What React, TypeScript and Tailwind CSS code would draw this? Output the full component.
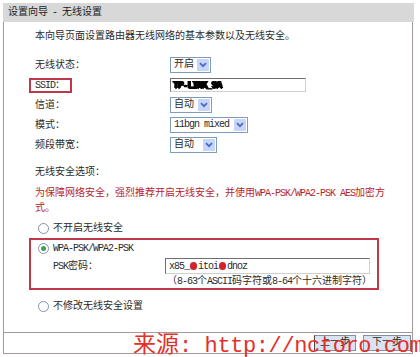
import React from 'react';

const cjk = 'font-["Liberation_Mono","Noto_Sans_CJK_SC",monospace]';

function En({ children }: { children: React.ReactNode }) {
  return <span className="tracking-[-1px]">{children}</span>;
}

function Select({ value, width, mono }: { value: string; width: string; mono?: boolean }) {
  return (
    <div className={`flex h-[16px] items-center border border-[#7f9db9] bg-white ${width}`}>
      <span className={`flex-1 pl-[3px] leading-none ${mono ? 'tracking-[-1px]' : ''}`}>{value}</span>
      <span className="mr-[1px] flex h-[12px] w-[12px] items-center justify-center rounded-[1px] bg-[#c6d5f8]">
        <svg width="8" height="6" viewBox="0 0 8 6">
          <path d="M1 1.2 L4 4.2 L7 1.2" fill="none" stroke="#4d6ac4" strokeWidth="1.8" />
        </svg>
      </span>
    </div>
  );
}

function Radio({ checked }: { checked?: boolean }) {
  return (
    <span className="flex h-[11px] w-[11px] items-center justify-center rounded-full border border-[#8593a8] bg-white">
      {checked && <span className="h-[5px] w-[5px] rounded-full bg-[#3aa64a]" />}
    </span>
  );
}

export default function App() {
  return (
    <div className={`relative h-[357px] w-[420px] overflow-hidden bg-white text-[10px] text-[#2b2b2b] ${cjk}`}>
      {/* title bar */}
      <div className="ml-[3px] mt-[3px] flex h-[19px] w-[411px] items-center bg-[#d8d8d8] pl-[5px] text-[#222]">
        设置向导 <span className="px-[4px]">-</span> 无线设置
      </div>

      <div className="ml-[3px] w-[410px] border-x border-b border-[#a89796]">
        <div className="h-[310px] pl-[31px] pt-[8px]">
          <div className="h-[14px] leading-[14px]">本向导页面设置路由器无线网络的基本参数以及无线安全。</div>

          <div className="mt-[11px]">
            <div className="flex h-[20px] items-center">
              <span className="w-[135px]">无线状态：</span>
              <Select value="开启" width="w-[41px]" />
            </div>
            <div className="flex h-[20px] items-center">
              <span className="w-[135px]">
                <span className="-ml-[6px] inline-block w-[43px] border-2 border-[#c0394a] pl-[4px] leading-[11px]">
                  <En>SSID</En>：
                </span>
              </span>
              <div className="flex h-[14px] w-[136px] items-center overflow-hidden border border-[#6f6f6f] border-b-[#cfcfcf] border-r-[#cfcfcf] bg-white pl-[2px]">
                <span className="text-[10px] font-black text-black blur-[0.4px] tracking-[-1.2px] [text-shadow:1px_0_0_#000,0_1px_0_#000,-1px_0_0_#000]">
                  TP-LINK_9A
                </span>
              </div>
            </div>
            <div className="flex h-[20px] items-center">
              <span className="w-[135px]">信道：</span>
              <Select value="自动" width="w-[42px]" />
            </div>
            <div className="flex h-[20px] items-center">
              <span className="w-[135px]">模式：</span>
              <Select value="11bgn mixed" width="w-[78px]" mono />
            </div>
            <div className="flex h-[20px] items-center">
              <span className="w-[135px]">频段带宽：</span>
              <Select value="自动" width="w-[47px]" />
            </div>
          </div>

          <div className="mt-[11px] h-[14px] leading-[14px]">无线安全选项：</div>
          <div className="mt-[6px] leading-[15px] text-[#b8242c]">
            为保障网络安全，强烈推荐开启无线安全，并使用<En>WPA-PSK/WPA2-PSK AES</En>加密方
            <br />
            式。
          </div>

          <div className="ml-[3px] mt-[4px] flex h-[16px] items-center gap-[4px]">
            <Radio />
            <span>不开启无线安全</span>
          </div>

          <div className="-ml-[6px] mt-[2px] h-[52px] w-[350px] border-2 border-[#c0394a] pl-[7px]">
            <div className="flex h-[16px] items-center gap-[4px]">
              <Radio checked />
              <En>WPA-PSK/WPA2-PSK</En>
            </div>
            <div className="ml-[15px] mt-[2px] flex h-[16px] items-center">
              <span className="w-[112px]">
                <En>PSK</En>密码：
              </span>
              <div className="flex h-[16px] w-[205px] items-center border border-[#6f6f6f] border-b-[#cfcfcf] border-r-[#cfcfcf] bg-white pl-[3px] tracking-[-1px]">
                x85_<span className="mx-[1px] inline-block h-[8px] w-[7px] rounded-full bg-[#d5232b]" />itoi
                <span className="mx-[1px] inline-block h-[8px] w-[7px] rounded-full bg-[#d5232b]" />dnoz
              </div>
            </div>
            <div className="ml-[129px] mt-[2px] h-[12px] leading-[12px]">
              （<En>8-63</En>个<En>ASCII</En>码字符或<En>8-64</En>个十六进制字符）
            </div>
          </div>

          <div className="ml-[3px] mt-[8px] flex h-[16px] items-center gap-[4px]">
            <Radio />
            <span>不修改无线安全设置</span>
          </div>
        </div>

        {/* footer */}
        <div className="flex h-[21px] items-center justify-end gap-[7px] border-t border-[#a89796] pr-[1px]">
          <button className="flex h-[16px] w-[42px] items-center justify-center border border-[#8090a8] border-l-[#444] bg-[#d9e4f2] leading-none">
            上一步
          </button>
          <button className="flex h-[16px] w-[48px] items-center justify-center border border-[#8090a8] bg-[#d9e4f2] leading-none">
            下一步
          </button>
        </div>
      </div>

      {/* watermark */}
      <div className="absolute left-[133px] top-[329px] flex items-baseline whitespace-nowrap leading-[26px] text-[#e3302b]">
        <span className='text-[23px] font-["Noto_Sans_CJK_SC",sans-serif]'>来源</span>
        <span className='text-[22px] tracking-[-0.4px] font-["Liberation_Mono",monospace]'>: http://nctoro.com</span>
      </div>
    </div>
  );
}
